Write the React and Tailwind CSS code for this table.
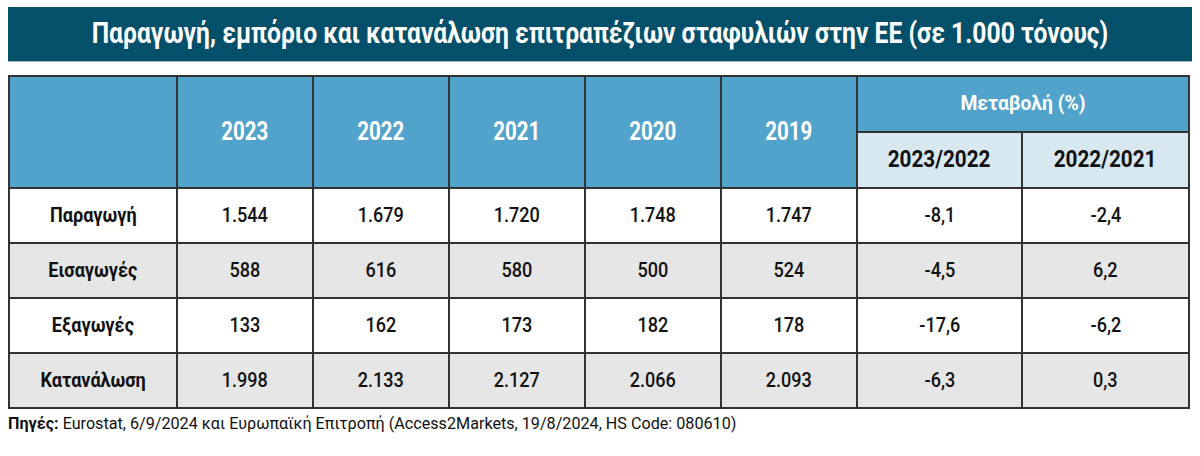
const years = ['2023', '2022', '2021', '2020', '2019'];

const rows = [
    { label: 'Παραγωγή', values: ['1.544', '1.679', '1.720', '1.748', '1.747'], change: ['-8,1', '-2,4'] },
    { label: 'Εισαγωγές', values: ['588', '616', '580', '500', '524'], change: ['-4,5', '6,2'] },
    { label: 'Εξαγωγές', values: ['133', '162', '173', '182', '178'], change: ['-17,6', '-6,2'] },
    { label: 'Κατανάλωση', values: ['1.998', '2.133', '2.127', '2.066', '2.093'], change: ['-6,3', '0,3'] },
];

const font = { fontFamily: 'Roboto, "Noto Sans", sans-serif' };

// Condensed look: the reference uses a narrow display face
const Narrow = ({ children, className = '' }) => (
    <span className={`inline-block whitespace-nowrap ${className}`}>{children}</span>
);

const cell = 'border-2 border-[#333] text-center';

const App = () => {
    return (
        <div className="w-[1200px] h-[456px] bg-white pt-[7px] px-[8px]" style={font}>
            {/* Title bar */}
            <div className="h-[55px] bg-[#044f6a] flex items-center justify-center border-b border-[#9fb6c0]">
                <Narrow className="text-white font-bold text-[29px] scale-x-[0.85]">
                    Παραγωγή, εμπόριο και κατανάλωση επιτραπέζιων σταφυλιών στην ΕΕ (σε 1.000 τόνους)
                </Narrow>
            </div>

            {/* Table */}
            <table className="mt-[13px] w-[1180px] table-fixed border-collapse border-2 border-[#333]">
                <colgroup>
                    <col className="w-[168px]" />
                    {years.map(y => <col key={y} className="w-[136px]" />)}
                    <col className="w-[165px]" />
                    <col className="w-[167px]" />
                </colgroup>
                <thead>
                    <tr className="h-[56px]">
                        <th rowSpan={2} className={`bg-[#52a3cc] ${cell}`}></th>
                        {years.map(y => (
                            <th key={y} rowSpan={2} className={`bg-[#52a3cc] ${cell}`}>
                                <Narrow className="text-white text-[25px] font-bold scale-x-[0.82]">{y}</Narrow>
                            </th>
                        ))}
                        <th colSpan={2} className={`bg-[#52a3cc] ${cell}`}>
                            <Narrow className="text-white text-[21px] font-bold scale-x-[0.92]">Μεταβολή (%)</Narrow>
                        </th>
                    </tr>
                    <tr className="h-[56px]">
                        <th className={`bg-[#d8e8f0] ${cell}`}>
                            <Narrow className="text-[#111] text-[23px] font-bold scale-x-[0.9]">2023/2022</Narrow>
                        </th>
                        <th className={`bg-[#d8e8f0] ${cell}`}>
                            <Narrow className="text-[#111] text-[23px] font-bold scale-x-[0.9]">2022/2021</Narrow>
                        </th>
                    </tr>
                </thead>
                <tbody>
                    {rows.map((row, i) => (
                        <tr key={row.label} className={`h-[55px] ${i % 2 === 1 ? 'bg-[#e6e6e6]' : 'bg-white'}`}>
                            <td className={cell}>
                                <Narrow className="text-[21px] font-bold text-[#111] scale-x-[0.86]">{row.label}</Narrow>
                            </td>
                            {[...row.values, ...row.change].map((v, j) => (
                                <td key={j} className={cell}>
                                    <Narrow className="text-[21px] font-medium text-[#111] scale-x-[0.86]">{v}</Narrow>
                                </td>
                            ))}
                        </tr>
                    ))}
                </tbody>
            </table>

            {/* Source */}
            <p className="mt-[3px] leading-[22px]">
                <Narrow className="text-[17px] text-[#111] origin-left scale-x-[0.95]">
                    <span className="font-bold">Πηγές:</span> Eurostat, 6/9/2024 και Ευρωπαϊκή Επιτροπή (Access2Markets, 19/8/2024, HS Code: 080610)
                </Narrow>
            </p>
        </div>
    );
};

export default App;
